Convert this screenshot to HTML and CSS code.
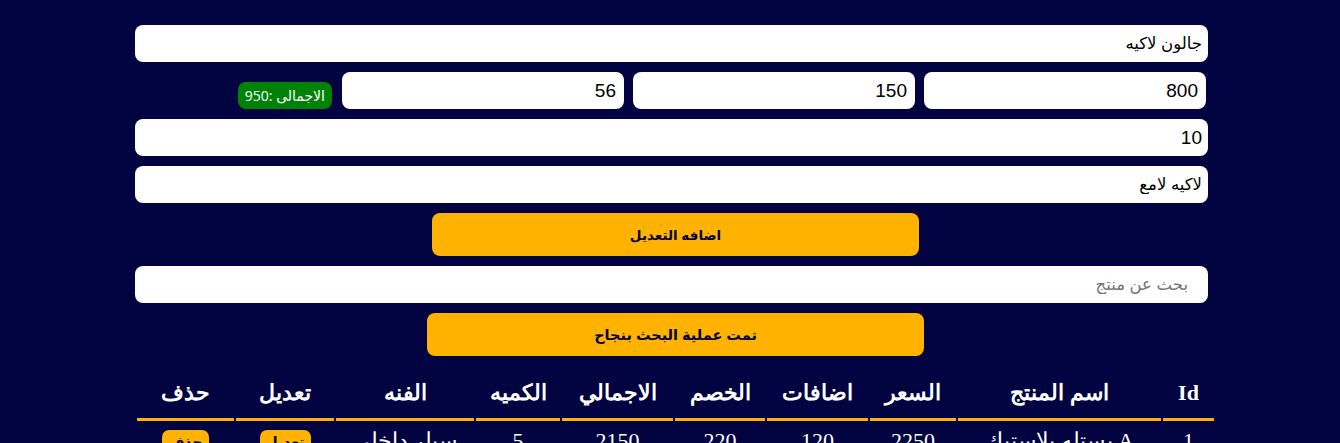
FILE: index.html
```html
<!DOCTYPE html>
<html lang="ar">
<head>
<meta charset="utf-8">
<title>المنتجات</title>
<link rel="stylesheet" href="styles.css">
</head>
<body>
<div class="page">
  <form class="product-form">
    <input class="field field-wide field-text" type="text" value="جالون لاكيه">
    <div class="price-row">
      <input class="field field-third" type="text" value="800">
      <input class="field field-third" type="text" value="150">
      <input class="field field-third" type="text" value="56">
      <span class="total">الاجمالى :950</span>
    </div>
    <input class="field field-wide" type="text" value="10">
    <input class="field field-wide field-text" type="text" value="لاكيه لامع">
    <button class="btn btn-save" type="button">اضافه التعديل</button>
  </form>
  <input class="field field-wide field-text search" type="text" placeholder="بحث عن منتج">
  <button class="btn btn-status" type="button">تمت عملية البحث بنجاح</button>
  <table class="products">
    <colgroup>
      <col class="c-id"><col class="c-name"><col class="c-price"><col class="c-extra"><col class="c-disc">
      <col class="c-total"><col class="c-qty"><col class="c-cat"><col class="c-edit"><col class="c-del">
    </colgroup>
    <thead>
      <tr>
        <th>Id</th>
        <th>اسم المنتج</th>
        <th>السعر</th>
        <th>اضافات</th>
        <th>الخصم</th>
        <th>الاجمالي</th>
        <th>الكميه</th>
        <th>الفنه</th>
        <th>تعديل</th>
        <th>حذف</th>
      </tr>
    </thead>
    <tbody>
      <tr>
        <td>1</td>
        <td>A بستله بلاستيك</td>
        <td>2250</td>
        <td>120</td>
        <td>220</td>
        <td>2150</td>
        <td>5</td>
        <td>سيلر داخلي</td>
        <td><button class="mini" type="button">تعديل</button></td>
        <td><button class="mini" type="button">حذف</button></td>
      </tr>
    </tbody>
  </table>
</div>
</body>
</html>
```
FILE: styles.css
```css
html, body {
  margin: 0;
  padding: 0;
  background: #010440;
}
body {
  font-family: "Liberation Sans", Arial, "DejaVu Sans", sans-serif;
}
.page {
  width: 1081px;
  margin-left: 135px;
  padding-top: 25px;
  display: flex;
  flex-direction: column;
  gap: 10px;
}
.product-form {
  display: flex;
  flex-direction: column;
  gap: 10px;
}
.field {
  box-sizing: border-box;
  height: 37px;
  border: none;
  outline: none;
  border-radius: 8px;
  background: #fff;
  color: #000;
  direction: rtl;
  text-align: right;
  padding: 0 6px;
  font-family: "Liberation Sans", Arial, "DejaVu Sans", sans-serif;
  font-size: 19px;
}
.field-text {
  font-size: 16.5px;
}
.field-wide {
  width: calc(100% - 8px);
}
.search {
  padding-right: 20px;
}
.search::placeholder {
  color: #757575;
}
.price-row {
  direction: rtl;
  display: flex;
  align-items: flex-end;
  gap: 9px;
  padding-right: 10px;
}
.field-third {
  width: 282px;
  flex: none;
  padding-right: 8px;
}
.total {
  box-sizing: border-box;
  height: 27px;
  padding: 0 7px;
  margin-right: 1px;
  display: flex;
  align-items: center;
  border-radius: 8px;
  background: #008208;
  color: #fff;
  font-family: "Open Sans", "Noto Sans", "DejaVu Sans", sans-serif;
  font-size: 14px;
  direction: rtl;
}
.btn {
  align-self: center;
  height: 43px;
  border: none;
  border-radius: 8px;
  background: #ffb300;
  color: #010440;
  font-family: "Liberation Sans", Arial, "DejaVu Sans", sans-serif;
  font-weight: bold;
  direction: rtl;
}
.btn-save {
  width: 45%;
  font-size: 13.5px;
}
.btn-status {
  width: 46%;
  font-size: 14.5px;
}
.products {
  direction: rtl;
  width: 1081px;
  table-layout: fixed;
  border-collapse: separate;
  border-spacing: 2px;
  color: #fff;
  font-family: "Liberation Serif", "Times New Roman", "DejaVu Serif", serif;
  font-size: 22px;
}
.c-id { width: 51px; }
.c-name { width: 203px; }
.c-price { width: 86px; }
.c-extra { width: 101px; }
.c-disc { width: 90px; }
.c-total { width: 111px; }
.c-qty { width: 84px; }
.c-cat { width: 138px; }
.c-edit { width: 98px; }
.c-del { width: 97px; }
.products th {
  padding: 12px 4px 12px;
  font-weight: bold;
  text-align: center;
  border-bottom: 3px solid #ffb300;
}
.products td {
  padding: 4px 4px;
  text-align: center;
  white-space: nowrap;
  overflow: hidden;
}
.mini {
  border: none;
  border-radius: 7px;
  background: #ffb300;
  color: #010440;
  font-family: "Liberation Sans", Arial, "DejaVu Sans", sans-serif;
  font-weight: bold;
  font-size: 14px;
  padding: 4px 6px;
}
```
